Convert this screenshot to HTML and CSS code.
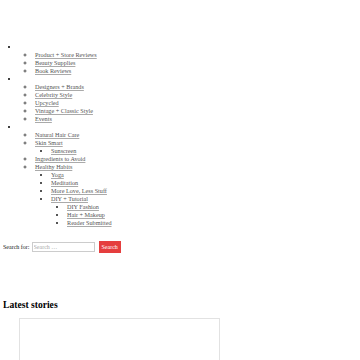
FILE: index.html
```html
<!DOCTYPE html>
<html lang="en">
<head>
    <meta charset="UTF-8">
    <meta name="viewport" content="width=device-width, initial-scale=1.0">
    <title>Latest stories</title>
    <link rel="stylesheet" href="styles.css">
</head>
<body>
    <header class="topbar"></header>
    <nav class="menu">
        <ul class="menu-root">
            <li>&nbsp;
                <ul>
                    <li><a href="#">Product + Store Reviews</a></li>
                    <li><a href="#">Beauty Supplies</a></li>
                    <li><a href="#">Book Reviews</a></li>
                </ul>
            </li>
            <li>&nbsp;
                <ul>
                    <li><a href="#">Designers + Brands</a></li>
                    <li><a href="#">Celebrity Style</a></li>
                    <li><a href="#">Upcycled</a></li>
                    <li><a href="#">Vintage + Classic Style</a></li>
                    <li><a href="#">Events</a></li>
                </ul>
            </li>
            <li>&nbsp;
                <ul>
                    <li><a href="#">Natural Hair Care</a></li>
                    <li><a href="#">Skin Smart</a>
                        <ul>
                            <li><a href="#">Sunscreen</a></li>
                        </ul>
                    </li>
                    <li><a href="#">Ingredients to Avoid</a></li>
                    <li><a href="#">Healthy Habits</a>
                        <ul>
                            <li><a href="#">Yoga</a></li>
                            <li><a href="#">Meditation</a></li>
                            <li><a href="#">More Love, Less Stuff</a></li>
                            <li><a href="#">DIY + Tutorial</a>
                                <ul>
                                    <li><a href="#">DIY Fashion</a></li>
                                    <li><a href="#">Hair + Makeup</a></li>
                                    <li><a href="#">Reader Submitted</a></li>
                                </ul>
                            </li>
                        </ul>
                    </li>
                </ul>
            </li>
        </ul>
    </nav>

    <form class="search">
        <label for="s">Search for:</label>
        <input type="search" id="s" placeholder="Search …">
        <button type="submit">Search</button>
    </form>

    <h2 class="latest">Latest stories</h2>
    <div class="story-box"></div>
</body>
</html>
```

FILE: styles.css
```css
body {
    font-family: "Liberation Serif", "Times New Roman", serif;
    margin: 0 3px;
    color: #000;
    background: #fff;
}
.topbar {
    height: 43px;
}
.menu ul {
    margin: 0;
    padding-left: 16px;
    font-size: 6.2px;
    line-height: 8px;
    list-style-type: square;
}
.menu .menu-root {
    list-style-type: disc;
}
.menu .menu-root > li > ul {
    list-style-type: circle;
}
.menu ul ul li::marker {
    color: #555;
}
.menu a {
    color: #555;
    text-decoration: underline;
    text-decoration-color: #aaa;
}

/* formulario de busca */
.search {
    display: flex;
    align-items: center;
    gap: 2px;
    margin-top: 14px;
    font-size: 6px;
}
.search label {
    color: #222;
}
.search input {
    width: 63px;
    height: 10px;
    padding: 0 1px;
    border: 1px solid #ccc;
    font-family: inherit;
    font-size: 6px;
    box-sizing: border-box;
}
.search input::placeholder {
    color: #aaa;
}
.search button {
    margin-left: 2px;
    height: 12px;
    padding: 0 3px;
    background: #e53e3e;
    color: #fff;
    border: none;
    font-family: inherit;
    font-size: 6px;
}

.latest {
    font-size: 9.6px;
    margin: 46px 0 8px;
}
.story-box {
    margin-left: 16px;
    width: 201px;
    height: 60px;
    border: 1px solid #e2e2e2;
    box-sizing: border-box;
}
```
